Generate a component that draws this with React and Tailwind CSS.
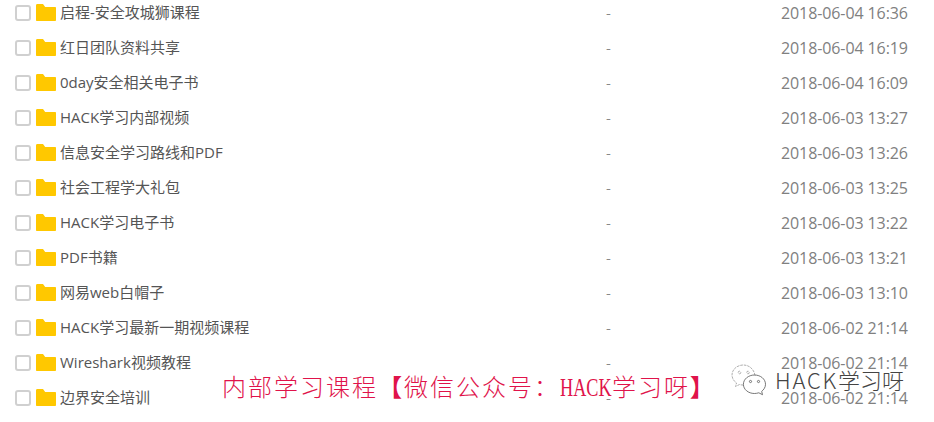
const rows = [
  ["启程-安全攻城狮课程", "2018-06-04 16:36"],
  ["红日团队资料共享", "2018-06-04 16:19"],
  ["0day安全相关电子书", "2018-06-04 16:09"],
  ["HACK学习内部视频", "2018-06-03 13:27"],
  ["信息安全学习路线和PDF", "2018-06-03 13:26"],
  ["社会工程学大礼包", "2018-06-03 13:25"],
  ["HACK学习电子书", "2018-06-03 13:22"],
  ["PDF书籍", "2018-06-03 13:21"],
  ["网易web白帽子", "2018-06-03 13:10"],
  ["HACK学习最新一期视频课程", "2018-06-02 21:14"],
  ["Wireshark视频教程", "2018-06-02 21:14"],
  ["边界安全培训", "2018-06-02 21:14"],
];

function Folder() {
  return (
    <svg width="20" height="17" viewBox="0 0 20 17" className="shrink-0">
      <path d="M0 1.5C0 .7.5 0 1.3 0H7l2.2 3H19c.6 0 1 .4 1 1v12c0 .6-.4 1-1 1H1c-.6 0-1-.4-1-1z" fill="#ffc800" />
    </svg>
  );
}

function WeChat() {
  return (
    <svg width="36" height="34" viewBox="0 0 36 34" fill="none" stroke="#999" strokeWidth="0.8" strokeDasharray="2.6 0.9">
      <path d="M24 12.5C23 6 18 2 12.5 2 6 2 1 6.5 1 12c0 3.300 1.800 6 4.500 8l-1 3.500 4-2c1.300.4 2.500.6 4 .6" />
      <circle cx="8.500" cy="9.500" r="1.300" />
      <circle cx="17" cy="9.500" r="1.300" />
      <path strokeDasharray="none" stroke="#555" d="M23.500 12C29.500 12 34.500 16 34.500 21.300c0 3-1.700 5.400-3.800 7.100l.8 3.300-3.700-1.900c-1.400.4-2.900.7-4.400.7-6 0-11-4-11-9.200S17.500 12 23.500 12z" />
      <circle cx="19.500" cy="18.500" r="1.100" stroke="#555" strokeDasharray="none" />
      <circle cx="27.500" cy="18.500" r="1.100" stroke="#555" strokeDasharray="none" />
    </svg>
  );
}

export default function App() {
  return (
    <div className="relative w-[934px] h-[422px] overflow-hidden bg-white font-['Noto_Sans_CJK_SC','Noto_Sans',sans-serif]">
      <div className="-mt-[5px] flex flex-col">
        {rows.map(([name, date]) => (
          <div key={name} className="flex h-[35px] items-center pl-[15px]">
            <span className="h-4 w-4 shrink-0 rounded-[3px] border-2 border-[#d0d0d0] bg-white" />
            <span className="ml-[5px] flex"><Folder /></span>
            <span className="ml-1 w-[546px] shrink-0 text-[15px] leading-none text-[#555] font-['Open_Sans','Noto_Sans_CJK_SC',sans-serif]">{name}</span>
            <span className="w-[175px] shrink-0 text-[14px] text-[#888]">-</span>
            <span className="text-[16px] leading-none text-[#808080] font-['Open_Sans',sans-serif] tracking-[-0.1px]">{date}</span>
          </div>
        ))}
      </div>
      <div className="absolute left-[222px] top-[370px] font-['Noto_Sans_CJK_SC',serif] text-[24px] leading-[32px] tracking-[2px] font-light text-[#e0134a] whitespace-nowrap">
        内部学习课程<span className="font-bold">【</span>微信公众号：<span className="inline-block w-[52px] origin-left scale-x-[0.7] font-['Liberation_Serif',serif] text-[26px] tracking-normal">HACK</span>学习呀<span className="font-bold">】</span>
      </div>
      <div className="absolute left-[731px] top-[363px] flex items-center gap-[8px]">
        <WeChat />
        <span className="-mt-[2px] text-[22px] leading-none font-light text-[#444] whitespace-nowrap [text-shadow:0_0_2px_#fff,0_0_1px_#fff]"><span className="tracking-[1.8px]">HACK</span>学习呀</span>
      </div>
    </div>
  );
}
